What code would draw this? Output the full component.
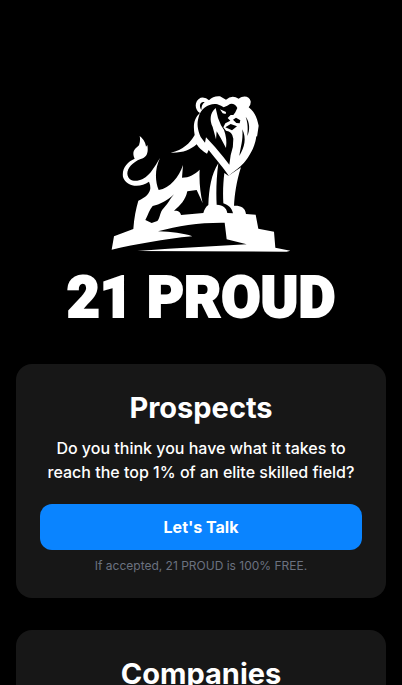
<main>
  <header class="brand">
    <svg class="lion" viewBox="3 0 600 525" aria-hidden="true">
      <g fill="#fff">
        <path d="M119 153C132 163 137 176 138 185L142 180C146 203 140 218 122 222C97 232 82 250 82 266C84 289 108 292 128 282C153 268 163 246 180 219C164 252 165 288 176 315C210 310 237 276 249 240L246 278C268 278 284 268 299 254C297 290 301 325 308 355C302 341 296 328 290 315L262 319C256 346 242 360 222 377C236 376 242 382 243 390L310 384C313 374 317 366 325 360C327 310 334 268 355 235C349 280 348 325 350 359C370 360 380 370 382 384L399 385C395 368 385 360 370 355C368 320 370 290 373 264L385 272L423 247C409 290 404 330 402 362C420 361 436 366 438 387L467 389L475 431L522 440L526 488L571 497L560 500L112 498L205 491L440 478L380 463L374 413C300 412 235 422 174 439C215 441 250 444 277 454C190 462 110 478 35 494L42 454L100 432C102 400 108 370 115 347C137 338 150 325 151 310Q151 298 147 290C120 310 78 306 69 276C65 250 82 230 104 221C94 199 105 192 117 181Q122 167 119 153Z"/>
        <path d="M300 84C283 75 282 47 302 38Q317 35 327 46Q340 32 360 34L378 44Q396 28 416 41C432 29 449 35 452 49Q453 60 446 67C468 84 472 105 476 122L471 156L469 152C466 185 448 215 432 233C418 249 400 260 386 272C370 248 350 226 326 195L321 206Q300 195 290 178C270 195 250 204 212 203C250 195 270 174 284 150C279 122 281 101 300 84Z"/>
      </g>
      <path d="M222 328C208 345 205 355 192 368C178 382 181 398 172 408L155 414L136 405C145 388 148 374 158 363C180 358 200 349 222 328Z"/>
      <g transform="translate(270 21)">
        <path d="M44 31C32 27 25 40 34 54Q34 38 44 31Z"/>
        <path d="M26 75C33 48 58 33 82 37Q95 41 101 46Q113 42 120 36Q134 33 142 48L136 61L130 69L122 69L113 78L121 86L106 94L100 106L108 116Q127 117 130 140Q131 165 122 190L118 218L100 195L75 165L48 136L45 152L32 135C22 112 20 95 26 75Z"/>
        <path fill="#fff" d="M77 48C60 62 58 85 68 105L78 142L80 118L92 138L108 168Q112 140 102 114L93 100L84 78ZM90 52L108 60L107 66L98 64Z"/>
        <path d="M129 83L138 77L151 85L149 94L139 93ZM106 106L122 96L141 103L126 115ZM157 112C170 140 164 165 148 192C151 168 160 145 157 112ZM167 74C180 90 180 115 172 132C174 110 174 95 167 74Z"/>
      </g>
    </svg>
    <h1>21 PROUD</h1>
  </header>
  <section class="card">
    <h2>Prospects</h2>
    <p>Do you think you have what it takes to reach the top 1% of an elite skilled field?</p>
    <button type="button">Let's Talk</button>
    <small>If accepted, 21 PROUD is 100% FREE.</small>
  </section>
  <section class="card">
    <h2>Companies</h2>
  </section>
</main>

<style>
  :global(body) { margin: 0; background: #000; }
  main {
    display: flex;
    flex-direction: column;
    gap: 32px;
    padding: 85px 16px 0;
    color: #fff;
    font-family: Inter, "Liberation Sans", sans-serif;
  }
  .brand { display: flex; flex-direction: column; align-items: center; }
  .lion { width: 200px; height: 175px; }
  h1 {
    margin: 0;
    padding-top: 4px;
    font-family: Roboto, Inter, sans-serif;
    font-size: 57px;
    font-weight: 900;
    line-height: 68px;
    white-space: nowrap;
    -webkit-text-stroke: 2px #fff;
  }
  .card {
    display: flex;
    flex-direction: column;
    padding: 24px;
    border-radius: 16px;
    background: #171717;
    text-align: center;
  }
  h2 { margin: 0 0 8px; font-size: 29px; font-weight: 700; line-height: 40px; }
  p { margin: 0 0 20px; font-size: 16px; font-weight: 500; line-height: 24px; }
  button {
    height: 46px;
    border: 0;
    border-radius: 12px;
    background: #0a84ff;
    color: #fff;
    font: 700 16px/24px Inter, "Liberation Sans", sans-serif;
  }
  small { margin-top: 8px; color: #6b7280; font-size: 12px; line-height: 16px; }
</style>
